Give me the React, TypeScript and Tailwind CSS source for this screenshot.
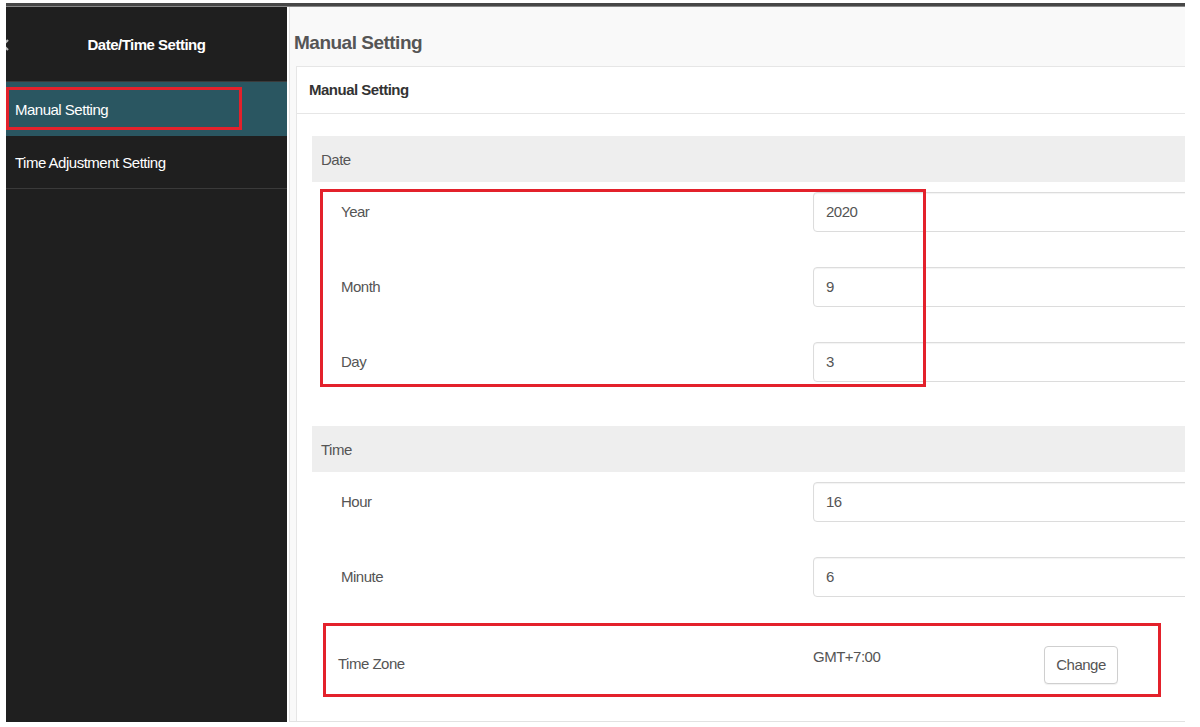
import React from 'react'

const font = "font-['Liberation_Sans',Arial,sans-serif]"

function Field({ label, value }: { label: string; value: string }) {
  return (
    <div className="flex items-center h-[40px]">
      <div className="w-[501px] shrink-0 pl-[29px] text-[15px] tracking-[-0.5px] text-[#555]">{label}</div>
      <div className="w-[520px] h-[40px] shrink-0 border border-[#dcdcdc] rounded-[4px] bg-white flex items-center pl-[12px] text-[15px] tracking-[-0.5px] text-[#555] shadow-[inset_0_1px_1px_rgba(0,0,0,0.05)]">
        {value}
      </div>
    </div>
  )
}

function SectionHeader({ title }: { title: string }) {
  return (
    <div className="h-[46px] bg-[#eeeeee] flex items-center pl-[9px] pt-[2px] text-[15px] tracking-[-0.5px] text-[#555]">
      {title}
    </div>
  )
}

export default function App() {
  return (
    <div className={`${font} w-[1200px] h-[727px] bg-white pl-[6px] pt-[3px] pr-[15px] pb-[5px] overflow-hidden`}>
      <div className="h-full flex flex-col overflow-hidden">
        {/* top bar */}
        <div className="h-[4px] bg-[#474747] border-b border-[#888]" />

        <div className="flex flex-1 min-h-0">
          {/* Sidebar */}
          <div className="w-[281px] shrink-0 bg-[#1f1f1f] flex flex-col">
            <div className="h-[75px] flex items-center pt-[2px] border-b border-[#3a3a3a] overflow-hidden">
              <div className="w-[4px] overflow-hidden shrink-0">
                <svg width="10" height="12" viewBox="0 0 10 12" className="-ml-[6px]">
                  <path d="M8 1 L3 6 L8 11" stroke="#bbb" strokeWidth="2.2" fill="none" />
                </svg>
              </div>
              <div className="flex-1 text-center pr-[4px] text-white font-bold text-[15px] tracking-[-0.5px]">
                Date/Time Setting
              </div>
            </div>
            <div className="relative h-[54px] bg-[#2a5661] flex items-center pl-[9px] pt-[2px] text-white text-[15px] tracking-[-0.5px]">
              Manual Setting
              <div className="absolute left-0 top-[5px] w-[236px] h-[43px] border-[3px] border-[#e3212b]" />
            </div>
            <div className="h-[53px] flex items-center pl-[9px] pt-[2px] text-white text-[15px] tracking-[-0.5px] border-b border-[#3a3a3a]">
              Time Adjustment Setting
            </div>
          </div>

          {/* Main */}
          <div className="flex-1 min-w-0 ml-[2px] border-l border-[#e2e2e2] border-b border-b-[#e2e2e2] bg-[#f9f9f9] flex flex-col overflow-hidden">
            <div className="h-[59px] shrink-0 pl-[4px] pt-[26px] leading-[20px] text-[19px] font-bold tracking-[-0.5px] text-[#555]">
              Manual Setting
            </div>
            <div className="flex-1 ml-[6px] bg-white border-t border-l border-[#e6e6e6] flex flex-col">
              <div className="h-[47px] shrink-0 flex items-center pl-[12px] border-b border-[#e6e6e6] text-[15px] font-bold tracking-[-0.5px] text-[#333]">
                Manual Setting
              </div>
              <div className="pl-[15px] pt-[22px] w-[1040px]">
                <SectionHeader title="Date" />
                <div className="relative flex flex-col gap-[35px] pt-[10px] mb-[44px]">
                  <Field label="Year" value="2020" />
                  <Field label="Month" value="9" />
                  <Field label="Day" value="3" />
                  <div className="absolute left-[8px] top-[7px] w-[606px] h-[198px] border-[3px] border-[#e3212b]" />
                </div>
                <SectionHeader title="Time" />
                <div className="flex flex-col gap-[35px] pt-[10px]">
                  <Field label="Hour" value="16" />
                  <Field label="Minute" value="6" />
                </div>
                <div className="relative h-[120px]">
                  <div className="flex items-start pt-[49px]">
                    <div className="w-[501px] shrink-0 pl-[26px] pt-[8px] leading-[20px] text-[15px] tracking-[-0.5px] text-[#555]">
                      Time Zone
                    </div>
                    <div className="w-[231px] shrink-0 pt-[1px] leading-[20px] text-[15px] tracking-[-0.5px] text-[#555]">
                      GMT+7:00
                    </div>
                    <button className="w-[74px] h-[38px] shrink-0 border border-[#cfcfcf] rounded-[4px] bg-white text-[15px] tracking-[-0.5px] text-[#555] shadow-[0_1px_1px_rgba(0,0,0,0.06)]">
                      Change
                    </button>
                  </div>
                  <div className="absolute left-[11px] top-[26px] w-[838px] h-[74px] border-[3px] border-[#e3212b]" />
                </div>
              </div>
            </div>
          </div>
        </div>
      </div>
    </div>
  )
}
